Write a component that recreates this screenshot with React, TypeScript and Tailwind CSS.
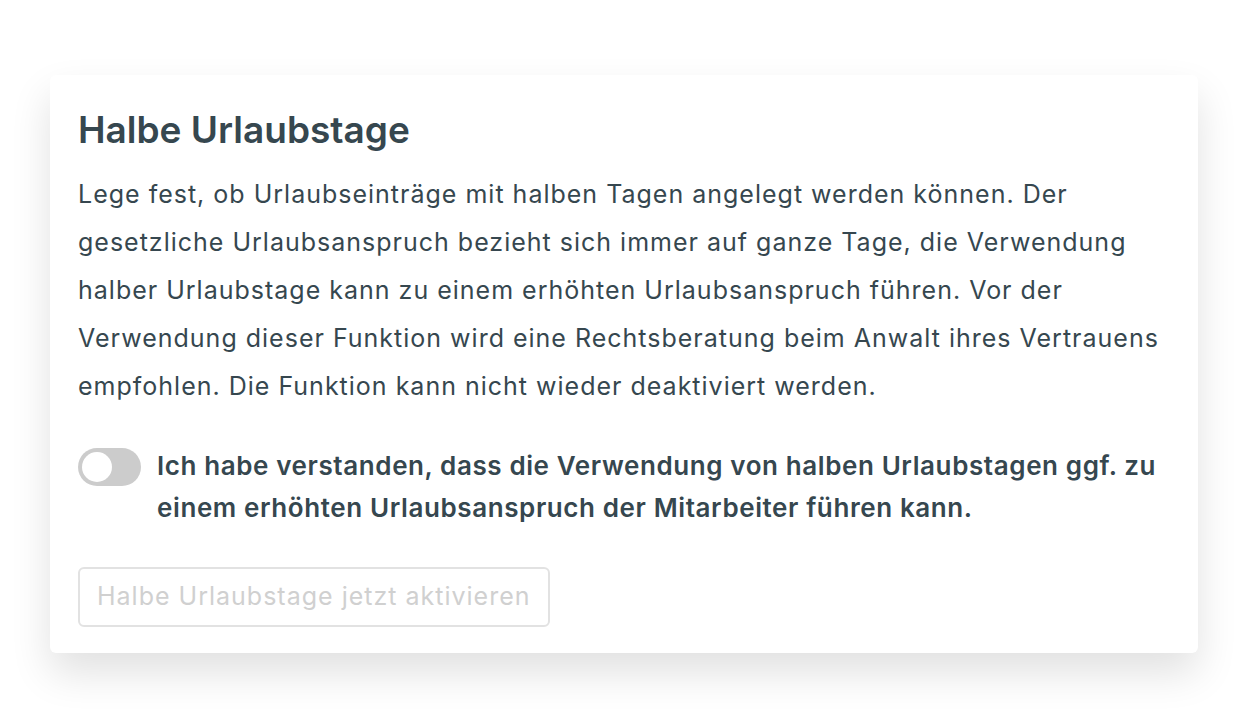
import { useState } from "react";

export default function App() {
  const [agreed, setAgreed] = useState(false);

  return (
    <div className="min-h-screen bg-white pt-[75px] px-[50px] font-['Inter',sans-serif] text-[#36474f]">
      <div className="bg-white rounded-md shadow-[0_20px_40px_rgba(0,0,0,0.12)] px-[28px] pt-[28px] pb-[26px]">
        <h2 className="text-[37px] font-semibold leading-[54px]">Halbe Urlaubstage</h2>
        <p className="mt-[13px] text-[25px] leading-[48px] tracking-[1px]">
          Lege fest, ob Urlaubseinträge mit halben Tagen angelegt werden können. Der gesetzliche
          Urlaubsanspruch bezieht sich immer auf ganze Tage, die Verwendung halber Urlaubstage kann zu
          einem erhöhten Urlaubsanspruch führen. Vor der Verwendung dieser Funktion wird eine
          Rechtsberatung beim Anwalt ihres Vertrauens empfohlen. Die Funktion kann nicht wieder
          deaktiviert werden.
        </p>

        <label className="mt-[35px] flex gap-[16px] cursor-pointer">
          <button
            type="button"
            onClick={() => setAgreed((v) => !v)}
            className={`mt-[3px] shrink-0 w-[63px] h-[38px] rounded-full p-[4px] flex transition-colors ${
              agreed ? "bg-[#2f9e6e] justify-end" : "bg-[#cccccc] justify-start"
            }`}
          >
            <span className="w-[30px] h-[30px] rounded-full bg-white" />
          </button>
          <span className="text-[26px] leading-[42px] font-semibold tracking-[0.6px]">
            Ich habe verstanden, dass die Verwendung von halben Urlaubstagen ggf. zu einem erhöhten
            Urlaubsanspruch der Mitarbeiter führen kann.
          </span>
        </label>

        <button
          type="button"
          disabled={!agreed}
          className="mt-[38px] h-[60px] px-[17px] rounded-md border-2 border-[#e2e2e2] text-[25px] tracking-[1px] text-[#d0d0d0] enabled:text-[#36474f] enabled:border-[#36474f]"
        >
          Halbe Urlaubstage jetzt aktivieren
        </button>
      </div>
    </div>
  );
}
